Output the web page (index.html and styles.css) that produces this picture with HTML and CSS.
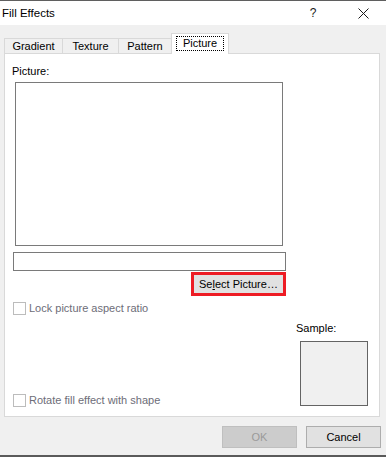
FILE: index.html
```html
<!DOCTYPE html>
<html>
<head>
<meta charset="utf-8">
<link rel="stylesheet" href="styles.css">
</head>
<body>
<div class="window">
  <div class="titlebar">
    <span class="title">Fill Effects</span>
    <span class="help">?</span>
    <svg class="close" width="11" height="11" viewBox="0 0 11 11"><path d="M0.5 0.5 L10.5 10.5 M10.5 0.5 L0.5 10.5" stroke="#1a1a1a" stroke-width="1" fill="none"/></svg>
  </div>
  <div class="body">
    <div class="tabs">
      <div class="tab t-gradient">Gradient</div>
      <div class="tab t-texture">Texture</div>
      <div class="tab t-pattern">Pattern</div>
      <div class="tab tab-active"><span class="focus">Picture</span></div>
    </div>
    <div class="panel">
      <div class="label">Picture:</div>
      <div class="picbox"></div>
      <div class="field"></div>
      <div class="select-row">
        <div class="select-btn">Se<u>l</u>ect Picture…</div>
      </div>
      <div class="lower">
        <div class="checks">
          <div class="check"><span class="box"></span><span class="check-text">Lock picture aspect ratio</span></div>
          <div class="check"><span class="box"></span><span class="check-text">Rotate fill effect with shape</span></div>
        </div>
        <div class="sample">
          <div class="sample-label">Sample:</div>
          <div class="sample-box"></div>
        </div>
      </div>
    </div>
    <div class="buttons">
      <div class="btn btn-disabled">OK</div>
      <div class="btn">Cancel</div>
    </div>
  </div>
</div>
</body>
</html>
```

FILE: styles.css
```css
* { box-sizing: border-box; }
html, body { margin: 0; padding: 0; }
body {
  font-family: "Liberation Sans", Arial, sans-serif;
  font-size: 11px;
  color: #000;
  background: #f0f0f0;
}
.window {
  width: 386px;
  height: 457px;
  display: flex;
  flex-direction: column;
  border-top: 1px solid #5f5f5f;
  border-bottom: 2px solid #5a5a5a;
  background: #f0f0f0;
  overflow: hidden;
}
.titlebar {
  height: 24px;
  background: #fff;
  display: flex;
  align-items: center;
  padding-left: 2px;
  flex: none;
}
.title { flex: 1; font-size: 11.5px; line-height: 15px; margin-top: 1px; }
.help {
  width: 10px;
  text-align: center;
  font-size: 12px;
  line-height: 15px;
  margin-top: 1px;
  color: #1a1a1a;
}
.close { margin-left: 40px; margin-right: 17px; margin-top: 1px; }
.body {
  flex: 1;
  padding: 8px 6px 0 4px;
  display: flex;
  flex-direction: column;
}
.tabs {
  display: flex;
  align-items: flex-end;
  height: 21px;
  margin-bottom: -1px;
  position: relative;
  z-index: 1;
}
.tab {
  height: 15px;
  margin-bottom: 1px;
  border: 1px solid #d9d9d9;
  border-bottom: none;
  background: #f0f0f0;
  text-align: center;
  line-height: 14px;
  margin-left: -1px;
}
.t-gradient { width: 59px; margin-left: 0; }
.t-texture { width: 57px; }
.t-pattern { width: 54px; }
.tab-active {
  width: 58px;
  height: 21px;
  margin-bottom: 0;
  background: #fff;
  padding-top: 2px;
  line-height: 13px;
  position: relative;
}
.focus {
  display: inline-block;
  border: 1px dotted #000;
  padding: 0 6px;
  line-height: 13px;
}
.panel {
  height: 364px;
  background: #fff;
  border: 1px solid #d9d9d9;
  flex: none;
}
.label {
  margin: 10px 0 0 7px;
  line-height: 15px;
  height: 15px;
}
.picbox {
  margin: 3px 0 0 10px;
  width: 268px;
  height: 164px;
  border: 1px solid #7a7a7a;
}
.field {
  margin: 6px 0 0 8px;
  width: 273px;
  height: 19px;
  border: 1px solid #7a7a7a;
}
.select-row {
  margin: 1px 0 0 8px;
  width: 273px;
  display: flex;
  justify-content: flex-end;
}
.select-btn {
  width: 95px;
  height: 24px;
  border: 3px solid #ed1c24;
  background: #e1e1e1;
  line-height: 18px;
  padding-left: 5px;
}
.select-btn u { text-decoration: underline; text-underline-offset: 1px; }
.lower {
  margin: 6px 11px 0 8px;
  height: 105px;
  display: flex;
}
.checks {
  flex: 1;
  display: flex;
  flex-direction: column;
  justify-content: space-between;
}
.check {
  display: flex;
  align-items: center;
  height: 13px;
}
.box {
  width: 13px;
  height: 13px;
  border: 1px solid #bcbcbc;
  background: #fff;
  flex: none;
}
.check-text {
  margin-left: 3px;
  color: #6d6d78;
  line-height: 13px;
}
.sample {
  width: 72px;
  padding-top: 19px;
}
.sample-label { line-height: 15px; height: 15px; }
.sample-box {
  margin: 5px 0 0 4px;
  width: 68px;
  height: 65px;
  border: 1px solid #646464;
  background: #f0f0f0;
}
.buttons {
  margin-top: 9px;
  margin-right: -1px;
  display: flex;
  justify-content: flex-end;
  gap: 9px;
}
.btn {
  width: 75px;
  height: 22px;
  border: 1px solid #adadad;
  background: #e1e1e1;
  text-align: center;
  line-height: 20px;
}
.btn-disabled {
  background: #cccccc;
  border-color: #bfbfbf;
  color: #9a9a9a;
}
```
